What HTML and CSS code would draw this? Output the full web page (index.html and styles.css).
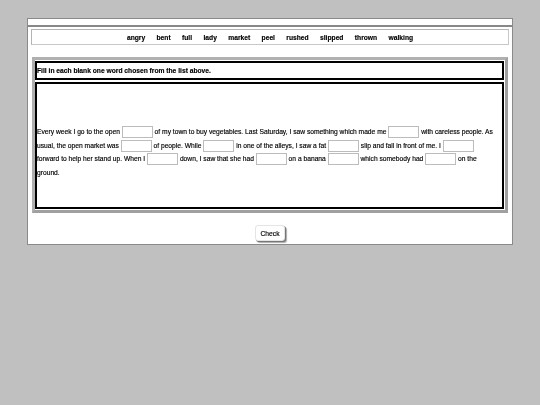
FILE: index.html
```html
<!DOCTYPE html>
<html>
<head>
<meta charset="utf-8">
<link rel="stylesheet" href="styles.css">
</head>
<body>
<div class="page">
  <div class="topbar"></div>
  <div class="words">
    <span>angry</span><span>bent</span><span>full</span><span>lady</span><span>market</span><span>peel</span><span>rushed</span><span>slipped</span><span>thrown</span><span>walking</span>
  </div>
  <div class="frame">
    <div class="box instr">Fill in each blank one word chosen from the list above.</div>
    <div class="box text">
      <p class="para">Every week I go to the open <input class="gap" type="text"> of my town to buy vegetables. Last Saturday, I saw something which made me <input class="gap" type="text"> with careless people. As usual, the open market was <input class="gap" type="text"> of people. While <input class="gap" type="text"> in one of the alleys, I saw a fat <input class="gap" type="text"> slip and fall in front of me. I <input class="gap" type="text"> forward to help her stand up. When I <input class="gap" type="text"> down, I saw that she had <input class="gap" type="text"> on a banana <input class="gap" type="text"> which somebody had <input class="gap" type="text"> on the ground.</p>
    </div>
  </div>
  <div class="actions"><button class="check" type="button">Check</button></div>
</div>
</body>
</html>
```
FILE: styles.css
```css
html, body {
  margin: 0;
  padding: 0;
  background: #c0c0c0;
  font-family: "Liberation Sans", Arial, sans-serif;
  color: #000;
}
.page {
  margin: 18px 0 0 27px;
  width: 484px;
  height: 225px;
  background: #fff;
  border: 1px solid #8a8a8a;
  filter: grayscale(1);
  -webkit-text-stroke: 0.15px #000;
}
.topbar {
  height: 6px;
  border-bottom: 2px solid #888;
}
.words {
  margin: 2px 3px 0 3px;
  height: 14px;
  border: 1px solid #b4b4b4;
  border-right-color: #c8c8c8;
  border-bottom-color: #c8c8c8;
  display: flex;
  justify-content: center;
  align-items: center;
  gap: 11.4px;
  font-size: 6.7px;
  font-weight: bold;
  color: #000;
}
.frame {
  margin: 12px 4px 0 4px;
  border: 3px solid #a0a0a0;
  border-top-color: #b0b0b0;
  border-left-color: #b0b0b0;
  padding: 1px 1px 1px 0;
  display: flex;
  flex-direction: column;
  gap: 2px;
}
.box {
  border: 2px solid #000;
}
.instr {
  height: 15px;
  line-height: 15px;
  padding-left: 0;
  font-size: 6.7px;
  font-weight: bold;
}
.text {
  height: 123px;
  padding: 0 7px 0 0;
  box-sizing: content-box;
}
.para {
  margin: 0;
  padding-top: 41px;
  font-size: 6.7px;
  line-height: 13.5px;
}
.gap {
  box-sizing: border-box;
  width: 31px;
  height: 12px;
  border: 1px solid #bcbcbc;
  padding: 0;
  margin: 0;
  vertical-align: middle;
  font-size: 6.7px;
}
.actions {
  display: flex;
  justify-content: center;
  margin-top: 12px;
}
.check {
  font-family: "Liberation Sans", Arial, sans-serif;
  font-size: 6.7px;
  color: #000;
  background: #fff;
  border: 1px solid #e4e4e4;
  border-radius: 3px;
  box-shadow: 1px 1px 0 #777, 2px 2px 1px #aaa;
  width: 30px;
  height: 16px;
  padding: 0;
  margin-left: 0;
}
```
